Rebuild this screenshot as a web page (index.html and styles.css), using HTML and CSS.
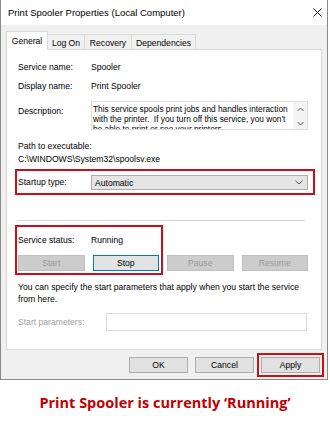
FILE: index.html
```html
<!DOCTYPE html>
<html lang="en">
<head>
    <meta charset="UTF-8">
    <meta name="viewport" content="width=device-width, initial-scale=1.0">
    <title>Print Spooler Properties</title>
    <link rel="stylesheet" href="styles.css">
</head>
<body>
    <div class="window">
        <div class="titlebar">
            <span class="title">Print Spooler Properties (Local Computer)</span>
            <svg class="close" width="9" height="9" viewBox="0 0 9 9">
                <path d="M0.5 0.5 L8.5 8.5 M8.5 0.5 L0.5 8.5" stroke="#111" stroke-width="1" fill="none"/>
            </svg>
        </div>

        <div class="client">
            <div class="tabs">
                <div class="tab active">General</div>
                <div class="tab tab-logon">Log On</div>
                <div class="tab tab-recovery">Recovery</div>
                <div class="tab tab-deps">Dependencies</div>
            </div>

            <div class="panel">
                <div class="row row-first">
                    <span class="label">Service name:</span>
                    <span>Spooler</span>
                </div>
                <div class="row">
                    <span class="label">Display name:</span>
                    <span>Print Spooler</span>
                </div>
                <div class="row desc-row">
                    <span class="label">Description:</span>
                    <div class="desc">
                        <div class="desc-text">
                            This service spools print jobs and handles interaction<br>
                            with the printer.&nbsp; If you turn off this service, you won't<br>
                            be able to print or see your printers.
                        </div>
                        <div class="desc-scroll">
                            <svg width="7" height="5" viewBox="0 0 7 5"><path d="M0.5 4 L3.5 1 L6.5 4" stroke="#606060" fill="none"/></svg>
                            <svg width="7" height="5" viewBox="0 0 7 5"><path d="M0.5 1 L3.5 4 L6.5 1" stroke="#606060" fill="none"/></svg>
                        </div>
                    </div>
                </div>

                <div class="path">
                    <div>Path to executable:</div>
                    <div>C:\WINDOWS\System32\spoolsv.exe</div>
                </div>

                <div class="row startup">
                    <span class="label">Startup type:</span>
                    <div class="combo">
                        <span>Automatic</span>
                        <svg width="8" height="5" viewBox="0 0 8 5"><path d="M0.5 0.8 L4 4 L7.5 0.8" stroke="#555" fill="none"/></svg>
                    </div>
                </div>

                <div class="sep"></div>

                <div class="status">
                    <div class="row">
                        <span class="label">Service status:</span>
                        <span>Running</span>
                    </div>
                    <div class="svc-buttons">
                        <button class="btn" disabled>Start</button>
                        <button class="btn btn-focus">Stop</button>
                        <button class="btn" disabled>Pause</button>
                        <button class="btn" disabled>Resume</button>
                    </div>
                    <div class="annot"></div>
                </div>

                <p class="hint">You can specify the start parameters that apply when you start the service from here.</p>

                <div class="row params">
                    <span class="label label-disabled">Start parameters:</span>
                    <div class="input"></div>
                </div>
            </div>

            <div class="footer">
                <button class="btn btn-dialog">OK</button>
                <button class="btn btn-dialog">Cancel</button>
                <button class="btn btn-dialog btn-marked">Apply</button>
            </div>
        </div>
    </div>

    <p class="caption">Print Spooler is currently &lsquo;Running&rsquo;</p>
</body>
</html>
```

FILE: styles.css
```css
* {
    margin: 0;
    padding: 0;
    box-sizing: border-box;
}

body {
    font-family: "Liberation Sans", Arial, sans-serif;
    font-size: 8.6px;
    color: #000;
    background: #fff;
    width: 330px;
}

/* dialog frame */
.window {
    width: 328px;
    border: 1px solid #8a8a8a;
    border-top: none;
    background: #f0f0f0;
}

.titlebar {
    height: 25px;
    background: #fff;
    display: flex;
    align-items: center;
    justify-content: space-between;
    padding: 0 5px 0 7px;
}

.title {
    font-size: 9.5px;
    color: #000;
}

.close {
    display: block;
    margin-top: -1px;
}

.client {
    padding: 6px 4px 6px 5px;
}

/* tabs */
.tabs {
    display: flex;
    align-items: flex-end;
    height: 18px;
}

.tab {
    height: 15px;
    border: 1px solid #d9d9d9;
    border-bottom: none;
    border-left: none;
    background: #f0f0f0;
    display: flex;
    align-items: center;
    justify-content: center;
    padding-top: 1px;
}

.tab.active {
    height: 19px;
    width: 42px;
    margin-bottom: -1px;
    background: #fff;
    border-left: 1px solid #d9d9d9;
    position: relative;
    z-index: 1;
    padding-top: 0;
    padding-bottom: 1px;
}

.tab-logon { width: 37px; border-left: none; }
.tab-recovery { width: 47px; }
.tab-deps { width: 64px; }

/* general page */
.panel {
    width: 316px;
    height: 301px;
    background: #fff;
    border: 1px solid #d9d9d9;
    padding: 0 13px 0 11px;
}

.row {
    display: flex;
    align-items: center;
    height: 14px;
    margin-top: 5px;
}

.row-first {
    margin-top: 10px;
}

.label {
    width: 73px;
    flex-shrink: 0;
}

.label-disabled {
    color: #a0a0a0;
}

.desc-row {
    align-items: flex-start;
    height: 29px;
    margin-top: 8px;
}

.desc-row .label {
    padding-top: 3px;
    line-height: 14px;
}

.desc {
    flex: 1;
    height: 29px;
    border: 1px solid #dcdcdc;
    display: flex;
    overflow: hidden;
}

.desc-text {
    flex: 1;
    padding: 2px 0 0 1px;
    font-size: 8.3px;
    line-height: 10px;
    white-space: nowrap;
    overflow: hidden;
}

.desc-scroll {
    width: 14px;
    background: #f4f4f4;
    display: flex;
    flex-direction: column;
    align-items: center;
    gap: 9px;
    padding-top: 5px;
}

.desc-scroll svg {
    display: block;
}

.path {
    margin-top: 10px;
    line-height: 13px;
}

.startup {
    height: 26px;
    margin: 3px -7px 0 -3px;
    padding: 0 5px 0 1px;
    border: 2px solid #c8101a;
}

.combo {
    flex: 1;
    height: 15px;
    margin-top: 1px;
    background: #e5e5e5;
    border: 1px solid #adadad;
    display: flex;
    align-items: center;
    justify-content: space-between;
    padding: 0 4px 0 3px;
}

.combo svg {
    display: block;
}

.sep {
    height: 1px;
    background: #d4d4d4;
    margin: 25px 3px 0 -1px;
}

.status {
    position: relative;
    margin-top: 4px;
    padding-top: 3px;
}

.svc-buttons {
    display: grid;
    grid-template-columns: repeat(4, 1fr);
    gap: 8px;
    margin-top: 8px;
}

/* red callout drawn over the status and the first two buttons */
.annot {
    position: absolute;
    left: -3px;
    top: 0;
    width: 148px;
    height: 50px;
    border: 2px solid #c8101a;
}

.btn {
    font-family: inherit;
    font-size: 8.6px;
    height: 16px;
    background: #e1e1e1;
    border: 1px solid #adadad;
    color: #000;
}

.btn:disabled {
    background: #cccccc;
    border-color: #bfbfbf;
    color: #9a9a9a;
}

.btn-focus {
    border-color: #0078d7;
    background: #e3e3e3;
}

.hint {
    margin-top: 11px;
    line-height: 11.5px;
}

.params {
    height: 18px;
    margin-top: 8px;
}

.params .label {
    width: 88px;
}

.input {
    flex: 1;
    height: 18px;
    border: 1px solid #d9d9d9;
    margin-right: 1px;
}

/* dialog buttons */
.footer {
    display: flex;
    justify-content: flex-end;
    gap: 7px;
    margin-top: 7px;
    padding-right: 3px;
}

.btn-dialog {
    width: 59px;
}

.btn-marked {
    outline: 2px solid #c8101a;
    outline-offset: 2px;
}

.caption {
    font-family: "Open Sans", "Noto Sans", sans-serif;
    font-weight: 700;
    font-size: 14.5px;
    color: #c00000;
    text-align: center;
    margin-top: 13px;
}
```
